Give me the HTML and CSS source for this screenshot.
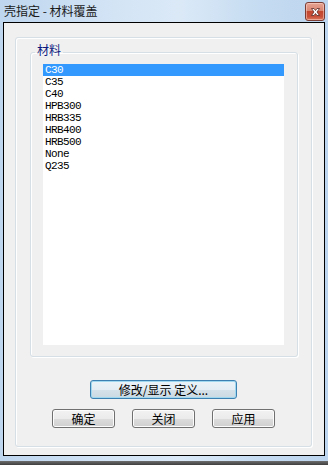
FILE: index.html
```html
<!DOCTYPE html>
<html lang="zh-CN">
<head>
    <meta charset="UTF-8">
    <meta name="viewport" content="width=device-width, initial-scale=1.0">
    <title>壳指定 - 材料覆盖</title>
    <link rel="stylesheet" href="styles.css">
</head>
<body>

<div class="window">
    <div class="titlebar">
        <span class="title">壳指定 - 材料覆盖</span>
        <button class="close-button" title="关闭">
            <svg width="9" height="8" viewBox="0 0 9 8">
                <path d="M0.5 0.5 H3 L4.5 2.5 L6 0.5 H8.5 L6 4 L8.5 7.5 H6 L4.5 5.5 L3 7.5 H0.5 L3 4 Z" fill="#fff" stroke="#5a2a24" stroke-width="0.8"/>
            </svg>
        </button>
    </div>

    <div class="client">
        <div class="panel">
            <fieldset class="group">
                <legend>材料</legend>
                <ul class="listbox">
                    <li class="selected">C30</li>
                    <li>C35</li>
                    <li>C40</li>
                    <li>HPB300</li>
                    <li>HRB335</li>
                    <li>HRB400</li>
                    <li>HRB500</li>
                    <li>None</li>
                    <li>Q235</li>
                </ul>
            </fieldset>

            <button class="btn btn-default btn-wide">修改/显示 定义...</button>

            <div class="button-row">
                <button class="btn">确定</button>
                <button class="btn">关闭</button>
                <button class="btn">应用</button>
            </div>
        </div>
    </div>

    <div class="frame-bottom"></div>
    <div class="taskbar"></div>
</div>

</body>
</html>
```

FILE: styles.css
```css
body {
    margin: 0;
    font-family: 'Noto Sans CJK SC', 'Noto Sans', sans-serif;
    font-size: 12px;
    color: #000;
    background-color: #c6dcf1;
}
.window {
    width: 328px;
    height: 465px;
    display: flex;
    flex-direction: column;
    background: linear-gradient(to right, #bed6ee 0%, #d3e4f5 35%, #dbe9f7 55%, #c4dbf1 80%, #bdd5ee 100%);
}
.titlebar {
    height: 22px;
    display: flex;
    align-items: flex-start;
    justify-content: space-between;
    padding: 0 3px 0 4px;
    box-sizing: border-box;
}
.title {
    font-size: 12px;
    line-height: 14px;
    margin-top: 4px;
    color: #1a1a1a;
}
.close-button {
    width: 20px;
    height: 19px;
    margin-top: 2px;
    padding: 0;
    border: 1px solid #7a3c33;
    border-radius: 3px;
    background: linear-gradient(to bottom, #e7a493 0%, #d98672 45%, #c3472f 50%, #c8503a 80%, #dc7a5e 100%);
    box-shadow: inset 0 0 0 1px rgba(255, 220, 210, 0.5);
    display: flex;
    align-items: center;
    justify-content: center;
}
.client {
    height: 434px;
    margin: 0 3px;
    border: 1px solid #000;
    background-color: #f0f0f0;
    box-sizing: border-box;
    padding: 14px 12px 8px 11px;
}
.panel {
    height: 100%;
    box-sizing: border-box;
    border: 1px solid #d5dfe5;
    border-radius: 3px;
    box-shadow: inset 1px 1px 0 #fff, 1px 1px 0 #fff;
    padding-top: 7px;
    display: flex;
    flex-direction: column;
    align-items: center;
}
.group {
    align-self: flex-start;
    width: 268px;
    margin: 0 0 0 14px;
    padding: 5px 12px 11px 12px;
    box-sizing: border-box;
    border: 1px solid #d5dfe5;
    border-radius: 3px;
    box-shadow: inset 1px 1px 0 #fff, 1px 1px 0 #fff;
}
.group legend {
    padding: 0 2px;
    margin-left: -8px;
    line-height: 14px;
    color: #0c1a80;
    position: relative;
    top: -2px;
}
.listbox {
    list-style: none;
    margin: 0;
    padding: 0;
    width: 241px;
    height: 281px;
    background-color: #fff;
    font-family: 'Liberation Mono', 'DejaVu Sans Mono', monospace;
    font-size: 11px;
    letter-spacing: -0.6px;
}
.listbox li {
    height: 12px;
    line-height: 12px;
    padding-left: 2px;
}
.listbox li.selected {
    background-color: #3399ff;
    color: #fff;
}
.btn {
    height: 19px;
    width: 63px;
    padding: 0;
    font-family: 'Noto Sans CJK SC', 'Noto Sans', sans-serif;
    font-size: 12px;
    line-height: 15px;
    color: #000;
    border: 1px solid #707070;
    border-radius: 3px;
    background: linear-gradient(to bottom, #f2f2f2 0%, #ebebeb 50%, #dddddd 51%, #cfcfcf 100%);
    box-shadow: inset 0 0 0 1px #fcfcfc;
}
.btn-default {
    border-color: #3c7fb1;
    box-shadow: inset 0 0 0 1px #9fd8ef;
    background: linear-gradient(to bottom, #eaf3f8 0%, #e3edf3 50%, #d6e2ea 51%, #cbd9e2 100%);
}
.btn-wide {
    width: 147px;
    margin-top: 23px;
}
.button-row {
    display: flex;
    gap: 17px;
    margin-top: 10px;
}
.frame-bottom {
    height: 5px;
}
.taskbar {
    height: 4px;
    background: linear-gradient(to bottom, #6d6d6d, #3f3f3f);
}
```
